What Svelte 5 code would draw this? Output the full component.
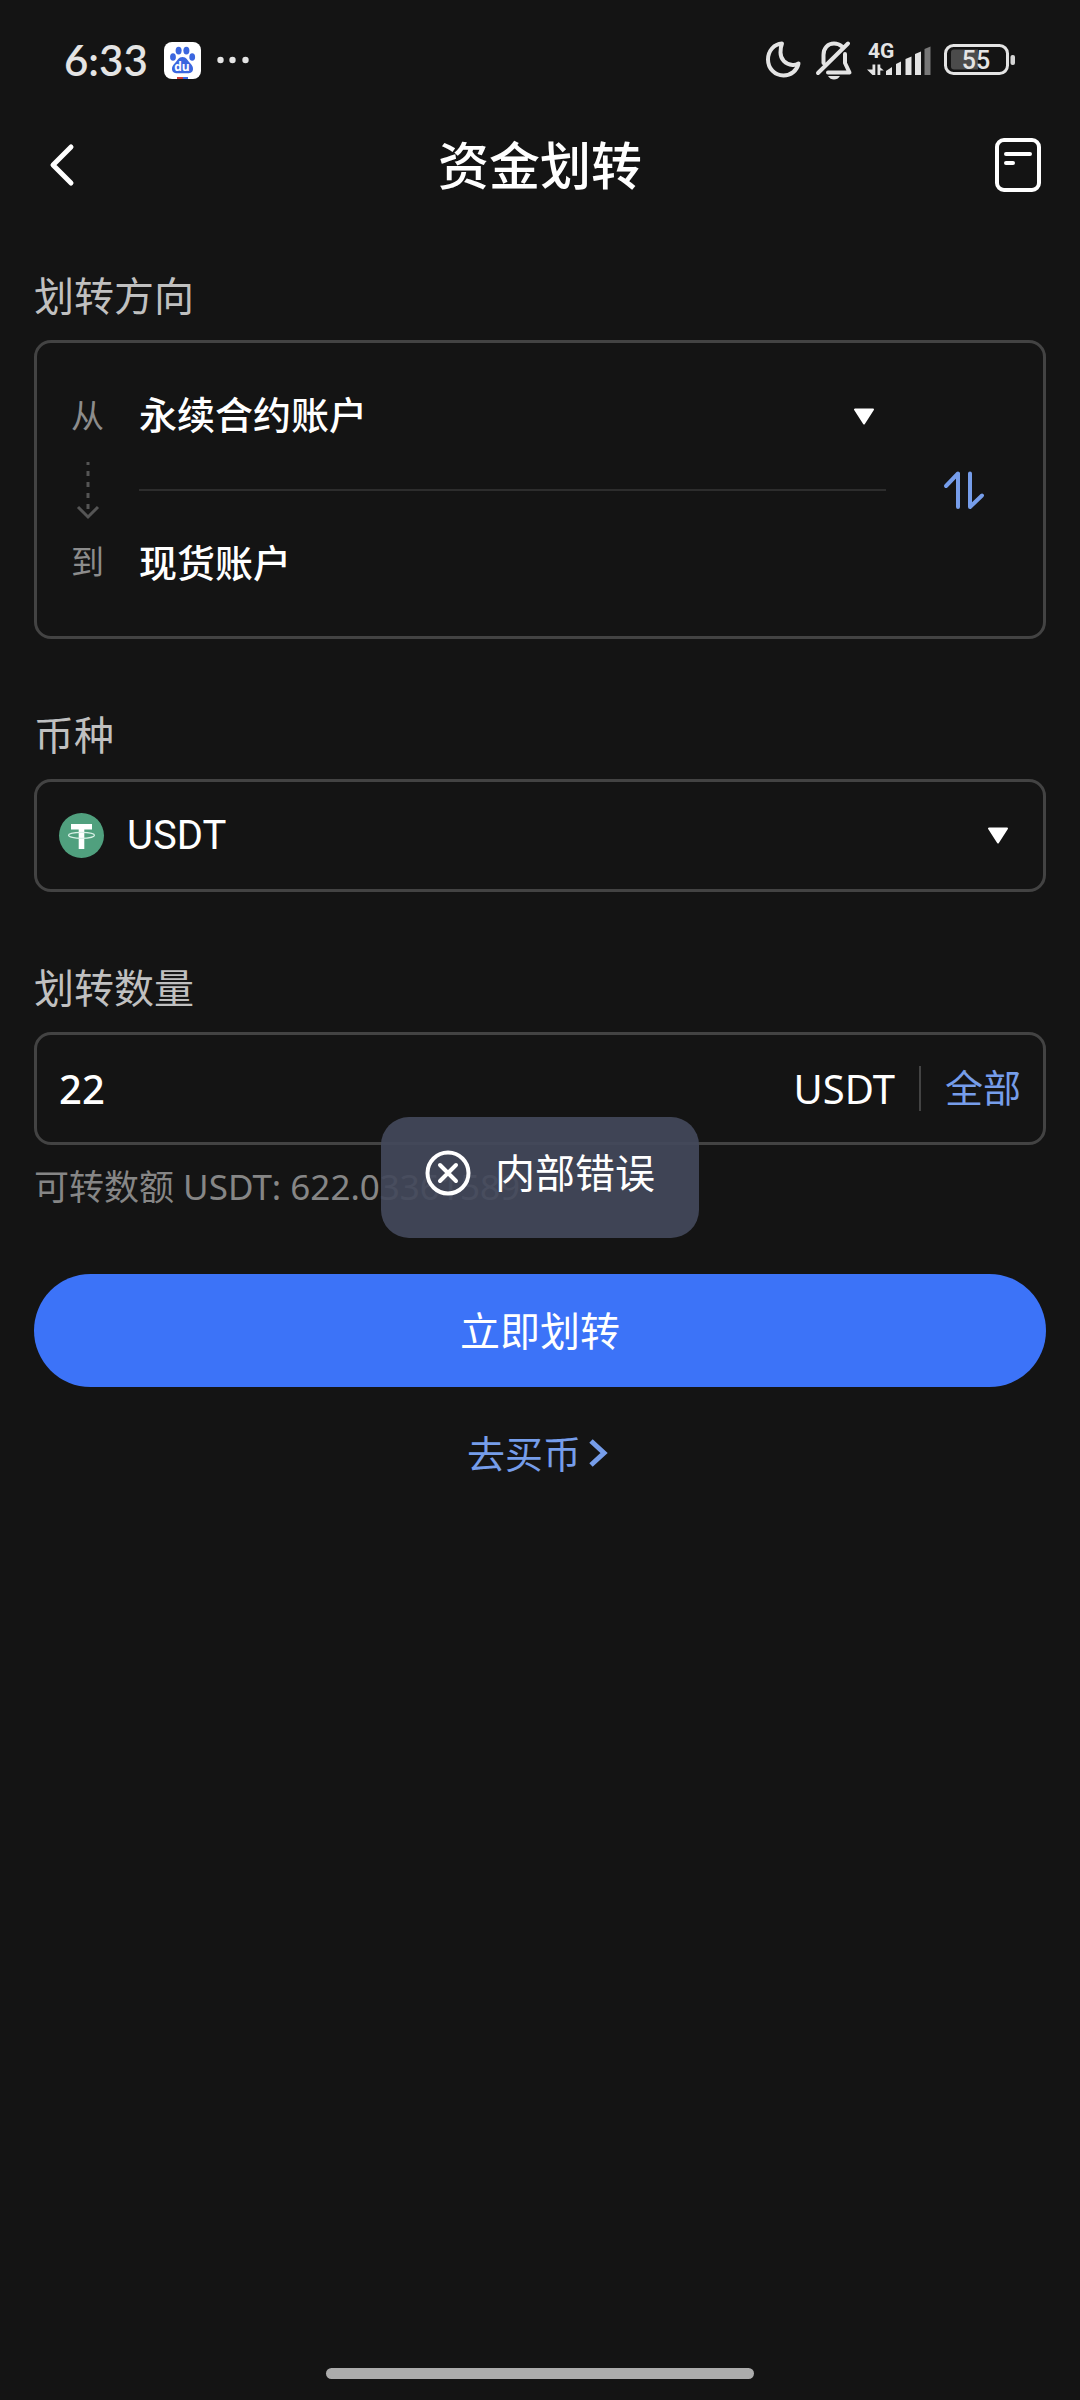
<script>
  let amount = $state('22');
</script>

<div class="screen">
  <header class="status">
    <div class="status-left">
      <time>6:33</time>
      <svg class="app" viewBox="0 0 37 37" role="img" aria-label="Baidu">
        <rect width="37" height="37" rx="8" fill="#fff" />
        <g fill="#3b66df">
          <ellipse cx="9" cy="15" rx="2.9" ry="3.8" />
          <ellipse cx="14.6" cy="8.6" rx="3" ry="3.9" />
          <ellipse cx="22.4" cy="8.6" rx="3" ry="3.9" />
          <ellipse cx="28.2" cy="15" rx="2.9" ry="3.8" />
          <path d="M18.5 15c4 0 5 3.500 7.500 6s3 4 3 6c0 3-2.500 4.200-5 4.200H13c-2.500 0-5-1.200-5-4.200 0-2 .5-3.500 3-6s3.500-6 7.500-6z" />
        </g>
        <text x="18" y="29" text-anchor="middle" class="du">du</text>
        <path d="M13 35h6v2h-6z" fill="#cf3b35" />
        <path d="M19 35h5v2h-5z" fill="#3b66df" />
      </svg>
      <svg class="dots" viewBox="0 0 32 8" aria-hidden="true">
        <circle cx="3.500" cy="4" r="3.200" /><circle cx="15.500" cy="4" r="3.200" /><circle cx="28.500" cy="4" r="3.200" />
      </svg>
    </div>
    <div class="status-right">
      <svg class="moon" viewBox="0 0 36 38" aria-hidden="true">
        <path d="M17 2.500C9 3 3 10 3 18.500c0 9.200 7 16 15.500 16 7.500 0 13.500-5 15-12-2 1.200-4 1.700-6 1.500-7-.8-12-5.500-12-12.500 0-3.500.5-6.500 1.500-9z" />
      </svg>
      <svg class="mute" viewBox="0 0 38 40" aria-hidden="true">
        <path d="M8.500 23v-8C8.500 8 13 3.500 19 3.500c3.500 0 6 1.200 8 3M30 14v9l4.500 9.500H13M3 33 33 3.500" />
        <path class="solid" d="M13 36h12c-1.500 2.500-3.500 3.500-6 3.500S14.500 38.500 13 36z" />
      </svg>
      <svg class="signal" viewBox="0 0 64 36" aria-hidden="true">
        <text x="1" y="16" class="net">4G</text>
        <path d="M5.500 22.500h2.800V33H5.500L0 27.500h5.500zM10.500 22.500h2.800v3l3.500 3h-3.500V33h-2.800z" />
        <path d="M19 33v-4l6-4v8zM29 33V22l5-2.500V33zM38.500 33V17l6-2.500V33zM48 33V12l6-2.500V33z" />
        <path d="M57.500 33V7l6-2.500V33z" fill="#777" />
      </svg>
      <svg class="battery" viewBox="0 0 72 32" aria-hidden="true">
        <rect x="1.500" y="1.500" width="62" height="28" rx="8" fill="none" stroke="#e4e4e4" stroke-width="3" />
        <path d="M10 5.500h24v20H10q-3 0-3-3v-14q0-3 3-3z" fill="#4b4b4b" />
        <text x="32" y="25" text-anchor="middle" class="pct">55</text>
        <rect x="66.500" y="11" width="4.500" height="10" rx="2" fill="#d5d5d5" />
      </svg>
    </div>
  </header>

  <nav class="bar">
    <button class="icon-btn" aria-label="返回">
      <svg class="back" viewBox="0 0 24 42"><path d="M21 3 3 21l18 18" /></svg>
    </button>
    <h1>资金划转</h1>
    <button class="icon-btn end" aria-label="记录">
      <svg class="record" viewBox="0 0 46 54">
        <rect x="2" y="2" width="42" height="50" rx="7" />
        <path d="M11 16h24M11 25h7" />
      </svg>
    </button>
  </nav>

  <main>
    <h2 id="direction">划转方向</h2>
    <section class="box route" aria-labelledby="direction">
      <div class="ends">
        <span>从</span>
        <svg class="down" viewBox="0 0 22 58" aria-hidden="true">
          <path d="M11 1v3M11 10v5M11 21v5M11 32v5M11 43v5" />
          <path d="M1 46l10 10 10-10" />
        </svg>
        <span>到</span>
      </div>
      <div class="accounts">
        <button class="account">
          <span>永续合约账户</span>
          <svg class="caret" viewBox="0 0 22 17"><path d="M2 1.500h18L11 15.500z" /></svg>
        </button>
        <hr />
        <button class="account"><span>现货账户</span></button>
      </div>
      <button class="swap" aria-label="互换">
        <svg viewBox="0 0 40 38"><path d="M2 15 14 2.500V36M26 2.500V36L38 24.500" /></svg>
      </button>
    </section>

    <h2 id="coin">币种</h2>
    <button class="box row coin" aria-labelledby="coin coin-name">
      <svg class="tether" viewBox="0 0 45 45" aria-hidden="true">
        <circle cx="22.500" cy="22.500" r="22.500" fill="#50a07e" />
        <path d="M12 11h21v5.500h-7.700V36h-5.600V16.500H12z" fill="#fff" />
        <ellipse cx="22.500" cy="22.300" rx="13" ry="3" fill="none" stroke="#d8f0e6" stroke-width="1.200" />
      </svg>
      <span id="coin-name">USDT</span>
      <svg class="caret" viewBox="0 0 22 17"><path d="M2 1.500h18L11 15.500z" /></svg>
    </button>

    <h2><label for="amount">划转数量</label></h2>
    <div class="box row">
      <input id="amount" inputmode="decimal" bind:value={amount} />
      <span class="unit">USDT</span>
      <i class="split"></i>
      <button class="all">全部</button>
    </div>

    <div class="available">
      <p>可转数额 USDT: 622.03361589</p>
      <div class="toast" role="alert">
        <svg viewBox="0 0 46 46" aria-hidden="true">
          <circle cx="23" cy="23" r="20.500" /><path d="M15 15l16 16M31 15 15 31" />
        </svg>
        <span>内部错误</span>
      </div>
    </div>

    <button class="submit">立即划转</button>
    <a class="buy" href="#buy">
      去买币
      <svg viewBox="0 0 18 28" aria-hidden="true"><path d="M2 2l13 12L2 26" /></svg>
    </a>
  </main>

  <footer><i></i></footer>
</div>

<style>
  :global(body) {
    background: #141414;
  }
  .screen {
    box-sizing: border-box;
    min-height: 100vh;
    display: flex;
    flex-direction: column;
    background: #141414;
    color: #fff;
    font-family: 'Noto Sans', 'Noto Sans CJK SC', sans-serif;
    font-size: 40px;
    line-height: 48px;
  }
  svg {
    display: block;
    flex: none;
    overflow: visible;
    fill: none;
    stroke-linecap: round;
    stroke-linejoin: round;
  }
  button,
  input {
    padding: 0;
    border: 0;
    background: none;
    color: inherit;
    font: inherit;
  }
  .status {
    display: flex;
    justify-content: space-between;
    align-items: center;
    height: 120px;
    padding: 0 64px;
    color: #e4e4e4;
  }
  .status-left,
  .status-right {
    display: flex;
    align-items: center;
  }
  time {
    font: 600 42px/48px Lato, sans-serif;
  }
  .app {
    width: 37px;
    height: 37px;
    margin-left: 16px;
  }
  .du {
    font: 700 12px 'Open Sans', sans-serif;
    fill: #fff;
  }
  .dots {
    width: 32px;
    height: 8px;
    margin-left: 16px;
    fill: #e4e4e4;
  }
  .moon {
    width: 36px;
    height: 38px;
    stroke: #e4e4e4;
    stroke-width: 4;
  }
  .mute {
    width: 38px;
    height: 40px;
    margin-left: 14px;
    stroke: #e4e4e4;
    stroke-width: 4;
  }
  .solid {
    fill: #e4e4e4;
    stroke: none;
  }
  .signal {
    width: 64px;
    height: 36px;
    margin-left: 14px;
    fill: #e4e4e4;
  }
  .net {
    font: 700 21px Roboto, sans-serif;
  }
  .battery {
    width: 72px;
    height: 32px;
    margin-left: 13px;
  }
  .pct {
    font: 500 25px Roboto, sans-serif;
    fill: #e4e4e4;
  }
  .bar {
    display: grid;
    grid-template-columns: 1fr auto 1fr;
    align-items: center;
    height: 90px;
    padding: 0 39px;
  }
  h1 {
    margin: 0;
    font-size: 51px;
    line-height: 60px;
    font-weight: 500;
  }
  .icon-btn {
    justify-self: start;
    padding-left: 11px;
  }
  .end {
    justify-self: end;
  }
  .back {
    width: 24px;
    height: 42px;
    stroke: #fff;
    stroke-width: 5;
  }
  .record {
    width: 46px;
    height: 54px;
    stroke: #fff;
    stroke-width: 4;
  }
  main {
    flex: 1;
    display: flex;
    flex-direction: column;
    padding: 62px 34px 0;
  }
  h2 {
    margin: 0;
    color: #c0c0c0;
    font-size: 40px;
    line-height: 48px;
    font-weight: 400;
  }
  .box {
    box-sizing: border-box;
    margin: 20px 0 72px;
    border: 3px solid #434343;
    border-radius: 17px;
  }
  .route {
    display: flex;
    align-items: center;
    padding: 49px 0 48px 34px;
    font-family: Roboto, 'Noto Sans CJK SC', sans-serif;
  }
  .ends {
    display: flex;
    flex-direction: column;
    align-items: center;
    gap: 20px;
    color: #8c8c8c;
    font-size: 33px;
  }
  .down {
    width: 22px;
    height: 58px;
    stroke: #555;
    stroke-width: 3;
    stroke-linecap: butt;
    stroke-linejoin: miter;
  }
  .accounts {
    flex: 1;
    margin-left: 35px;
  }
  .account {
    display: flex;
    justify-content: space-between;
    align-items: center;
    width: 100%;
    padding-right: 11px;
    font-size: 38px;
    font-weight: 500;
  }
  hr {
    height: 2px;
    margin: 49px 0;
    border: 0;
    background: #2d2d2d;
  }
  .caret {
    width: 22px;
    height: 17px;
    fill: #fff;
    stroke: #fff;
    stroke-width: 2;
  }
  .swap {
    padding: 20px 59px 20px 58px;
  }
  .swap svg {
    width: 40px;
    height: 38px;
    stroke: #769dea;
    stroke-width: 4;
  }
  .row {
    display: flex;
    align-items: center;
    height: 113px;
    padding: 0 22px;
  }
  .coin {
    padding-right: 34px;
    font-family: Roboto, sans-serif;
  }
  .coin span {
    flex: 1;
    margin-left: 23px;
    text-align: left;
  }
  .tether {
    width: 45px;
    height: 45px;
  }
  #amount {
    flex: 1;
    min-width: 0;
    outline: 0;
    font-weight: 500;
  }
  .split {
    width: 2px;
    height: 45px;
    margin: 0 24px;
    background: #434343;
  }
  .all {
    color: #769dea;
    font-family: Roboto, 'Noto Sans CJK SC', sans-serif;
    font-size: 38px;
  }
  .available {
    position: relative;
    margin-top: -54px;
  }
  .available p {
    margin: 0;
    color: #868686;
    font-size: 35px;
  }
  .toast {
    position: absolute;
    top: -46px;
    left: 50%;
    transform: translateX(-50%);
    box-sizing: border-box;
    display: flex;
    align-items: center;
    gap: 24px;
    padding: 32px 44px 41px;
    border-radius: 28px;
    background: rgba(67, 73, 91, 0.92);
    white-space: nowrap;
  }
  .toast svg {
    width: 46px;
    height: 46px;
    stroke: #fff;
    stroke-width: 4;
  }
  .submit {
    height: 113px;
    margin-top: 63px;
    border-radius: 57px;
    background: #3c73f8;
  }
  .buy {
    display: flex;
    align-items: center;
    align-self: center;
    gap: 8px;
    margin-top: 42px;
    padding-right: 6px;
    color: #769dea;
    font-size: 38px;
    text-decoration: none;
  }
  .buy svg {
    width: 18px;
    height: 28px;
    stroke: #769dea;
    stroke-width: 5;
    stroke-linecap: butt;
    stroke-linejoin: miter;
  }
  footer {
    display: flex;
    justify-content: center;
    padding-bottom: 21px;
  }
  footer i {
    width: 428px;
    height: 11px;
    border-radius: 6px;
    background: #acacac;
  }
</style>
